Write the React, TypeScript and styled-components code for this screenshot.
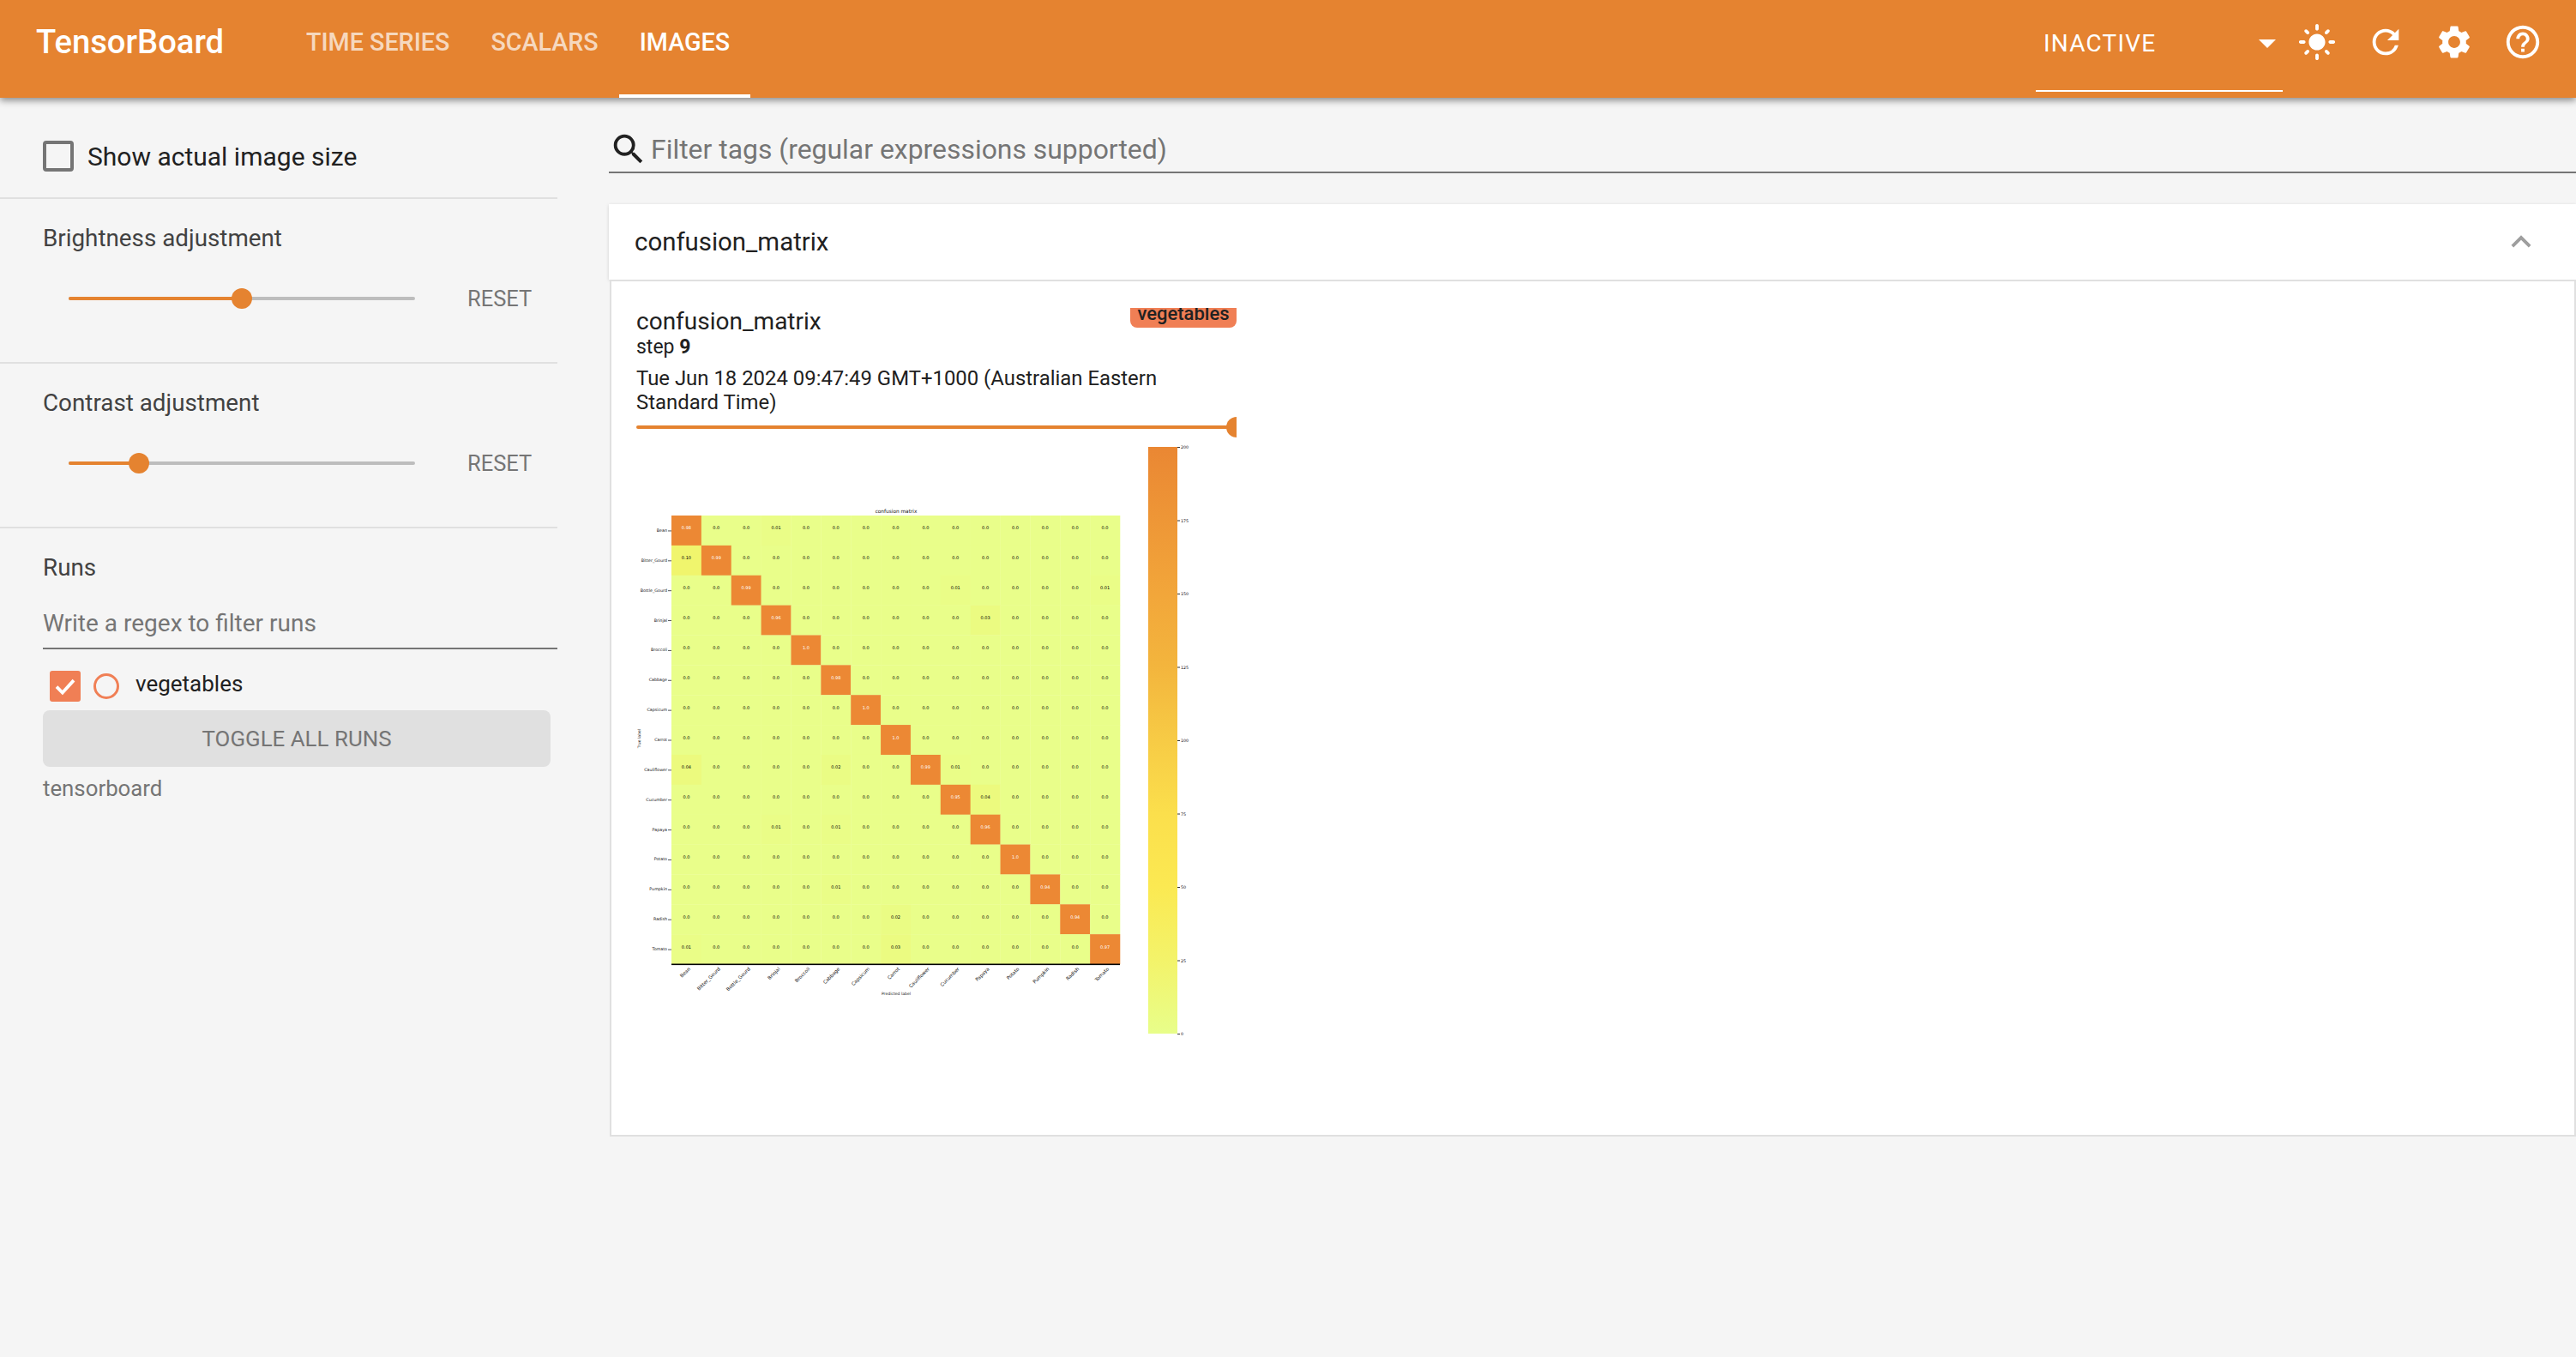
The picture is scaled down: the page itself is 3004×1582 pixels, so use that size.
import styled, { createGlobalStyle } from 'styled-components';

const ORANGE = '#e58330';
const RUN = '#f07f55';

const classes = [
  'Bean',
  'Bitter_Gourd',
  'Bottle_Gourd',
  'Brinjal',
  'Broccoli',
  'Cabbage',
  'Capsicum',
  'Carrot',
  'Cauliflower',
  'Cucumber',
  'Papaya',
  'Potato',
  'Pumpkin',
  'Radish',
  'Tomato',
];

const diagonal = [0.98, 0.99, 0.99, 0.96, 1.0, 0.98, 1.0, 1.0, 0.99, 0.95, 0.96, 1.0, 0.94, 0.94, 0.97];

// off-diagonal values, key is row-col
const offDiagonal: Record<string, number> = {
  '0-3': 0.01,
  '1-0': 0.1,
  '2-9': 0.01,
  '2-14': 0.01,
  '3-10': 0.03,
  '8-0': 0.04,
  '8-5': 0.02,
  '8-9': 0.01,
  '9-10': 0.04,
  '10-3': 0.01,
  '10-5': 0.01,
  '12-5': 0.01,
  '13-7': 0.02,
  '14-0': 0.01,
  '14-7': 0.03,
};

const ticks = ['200', '175', '150', '125', '100', '75', '50', '25', '0'];

const cellColor = (v: number) => {
  if (v > 0.5) return '#ec8834';
  const t = Math.min(v / 0.1, 1);
  const r = Math.round(233 + (240 - 233) * t);
  const g = Math.round(254 + (245 - 254) * t);
  const b = Math.round(138 + (109 - 138) * t);
  return `rgb(${r},${g},${b})`;
};

function Matrix() {
  const left = 783;
  const top = 601;
  const size = 523 / 15;

  return (
    <ChartSvg viewBox="743 510 699 705" width="699" height="705">
      <defs>
        <linearGradient id="bar" x1="0" y1="0" x2="0" y2="1">
          <stop offset="0" stopColor="#ea8733" />
          <stop offset="0.25" stopColor="#f2a63a" />
          <stop offset="0.375" stopColor="#f3b53d" />
          <stop offset="0.5" stopColor="#f7cb45" />
          <stop offset="0.625" stopColor="#fbdf4c" />
          <stop offset="0.75" stopColor="#fbe952" />
          <stop offset="0.875" stopColor="#f3f36a" />
          <stop offset="1" stopColor="#e8fe8a" />
        </linearGradient>
      </defs>

      <text x="1045" y="598" fontSize="5.8" textAnchor="middle" fill="#111">
        confusion matrix
      </text>

      {classes.map((_, row) =>
        classes.map((_, col) => {
          const v = row === col ? diagonal[row] : offDiagonal[`${row}-${col}`] || 0;
          const x = left + col * size;
          const y = top + row * size;
          return (
            <g key={`${row}-${col}`}>
              <rect x={x} y={y} width={size + 0.3} height={size + 0.3} fill={cellColor(v)} />
              <text
                x={x + size / 2}
                y={y + size / 2 - 1}
                fontSize="5"
                textAnchor="middle"
                fill={row === col ? '#fff' : '#000'}
              >
                {v === 0 ? '0.0' : v === 1 ? '1.0' : v.toFixed(2)}
              </text>
            </g>
          );
        }),
      )}

      {classes.map((name, i) => (
        <g key={name}>
          <text x={778} y={top + i * size + size / 2 + 1.5} fontSize="4.8" textAnchor="end" fill="#111">
            {name}
          </text>
          <rect x={779} y={top + i * size + size / 2} width={4} height={1} fill="#555" />
          <text
            fontSize="5.6"
            textAnchor="end"
            fill="#111"
            transform={`translate(${left + i * size + size / 2 + 5} 1130) rotate(-45)`}
          >
            {name}
          </text>
        </g>
      ))}

      <rect x={783} y={1123.5} width={523} height={1.6} fill="#000" />
      <text x="1045" y="1160" fontSize="4.6" textAnchor="middle" fill="#111">
        Predicted label
      </text>
      <text fontSize="4.6" textAnchor="middle" fill="#111" transform="translate(747 861) rotate(-90)">
        True label
      </text>

      <rect x={1339} y={521} width={34} height={684} fill="url(#bar)" />
      {ticks.map((label, i) => (
        <g key={label}>
          <rect x={1373} y={521 + i * 85.5} width={3} height={1} fill="#333" />
          <text x={1377} y={523 + i * 85.5} fontSize="4.8" fill="#111">
            {label}
          </text>
        </g>
      ))}
    </ChartSvg>
  );
}

function Adjustment({ label, percent }: { label: string; percent: number }) {
  return (
    <Section>
      <SectionLabel>{label}</SectionLabel>
      <SliderRow>
        <SliderTrack>
          <SliderFill style={{ width: `${percent}%` }} />
          <SliderThumb style={{ left: `${percent}%` }} />
        </SliderTrack>
        <ResetLabel>RESET</ResetLabel>
      </SliderRow>
    </Section>
  );
}

export default function App() {
  return (
    <>
      <GlobalStyle />
      <Toolbar>
        <Logo>TensorBoard</Logo>
        <Tabs>
          <Tab>TIME SERIES</Tab>
          <Tab>SCALARS</Tab>
          <Tab $active>IMAGES</Tab>
        </Tabs>
        <ToolbarRight>
          <StatusSelect>
            INACTIVE
            <Caret />
          </StatusSelect>
          <IconButton>
            <svg viewBox="0 0 24 24" width="46" height="46" fill="#fff">
              <path d="M12,7c-2.76,0-5,2.24-5,5s2.24,5,5,5s5-2.24,5-5S14.76,7,12,7L12,7z M2,13l2,0c0.55,0,1-0.45,1-1s-0.45-1-1-1l-2,0c-0.55,0-1,0.45-1,1S1.45,13,2,13z M20,13l2,0c0.55,0,1-0.45,1-1s-0.45-1-1-1l-2,0c-0.55,0-1,0.45-1,1S19.45,13,20,13z M11,2v2c0,0.55,0.45,1,1,1s1-0.45,1-1V2c0-0.55-0.45-1-1-1S11,1.45,11,2z M11,20v2c0,0.55,0.45,1,1,1s1-0.45,1-1v-2c0-0.55-0.45-1-1-1C11.45,19,11,19.45,11,20z M5.99,4.58c-0.39-0.39-1.03-0.39-1.41,0 c-0.39,0.39-0.39,1.03,0,1.41l1.06,1.06c0.39,0.39,1.03,0.39,1.41,0s0.39-1.03,0-1.41L5.99,4.58z M18.36,16.95 c-0.39-0.39-1.03-0.39-1.41,0c-0.39,0.39-0.39,1.03,0,1.41l1.06,1.06c0.39,0.39,1.03,0.39,1.41,0c0.39-0.39,0.39-1.03,0-1.41 L18.36,16.95z M19.42,5.99c0.39-0.39,0.39-1.03,0-1.41c-0.39-0.39-1.03-0.39-1.41,0l-1.06,1.06c-0.39,0.39-0.39,1.03,0,1.41 s1.03,0.39,1.41,0L19.42,5.99z M7.05,18.36c0.39-0.39,0.39-1.03,0-1.41c-0.39-0.39-1.03-0.39-1.41,0l-1.06,1.06 c-0.39,0.39-0.39,1.03,0,1.41s1.03,0.39,1.41,0L7.05,18.36z" />
            </svg>
          </IconButton>
          <IconButton>
            <svg viewBox="0 0 24 24" width="46" height="46" fill="#fff">
              <path d="M17.65 6.35A7.958 7.958 0 0 0 12 4c-4.42 0-7.99 3.58-7.99 8s3.57 8 7.99 8c3.73 0 6.84-2.55 7.73-6h-2.08A5.99 5.99 0 0 1 12 18c-3.31 0-6-2.69-6-6s2.69-6 6-6c1.66 0 3.14.69 4.22 1.78L13 11h7V4l-2.35 2.35z" />
            </svg>
          </IconButton>
          <IconButton>
            <svg viewBox="0 0 24 24" width="46" height="46" fill="#fff">
              <path d="M19.14 12.94c.04-.3.06-.61.06-.94 0-.32-.02-.64-.07-.94l2.03-1.58a.49.49 0 0 0 .12-.61l-1.92-3.32a.488.488 0 0 0-.59-.22l-2.39.96c-.5-.38-1.03-.7-1.62-.94l-.36-2.54a.484.484 0 0 0-.48-.41h-3.84c-.24 0-.43.17-.47.41l-.36 2.54c-.59.24-1.13.57-1.62.94l-2.39-.96c-.22-.08-.47 0-.59.22L2.74 8.87c-.12.21-.08.47.12.61l2.03 1.58c-.05.3-.09.63-.09.94s.02.64.07.94l-2.03 1.58a.49.49 0 0 0-.12.61l1.92 3.32c.12.22.37.29.59.22l2.39-.96c.5.38 1.03.7 1.62.94l.36 2.54c.05.24.24.41.48.41h3.84c.24 0 .44-.17.47-.41l.36-2.54c.59-.24 1.13-.56 1.62-.94l2.39.96c.22.08.47 0 .59-.22l1.92-3.32c.12-.22.07-.47-.12-.61l-2.01-1.58zM12 15.6c-1.98 0-3.6-1.62-3.6-3.6s1.62-3.6 3.6-3.6 3.6 1.62 3.6 3.6-1.62 3.6-3.6 3.6z" />
            </svg>
          </IconButton>
          <IconButton>
            <svg viewBox="0 0 24 24" width="46" height="46" fill="#fff">
              <path d="M11 18h2v-2h-2v2zm1-16C6.48 2 2 6.48 2 12s4.48 10 10 10 10-4.48 10-10S17.52 2 12 2zm0 18c-4.41 0-8-3.59-8-8s3.59-8 8-8 8 3.59 8 8-3.59 8-8 8zm0-14c-2.21 0-4 1.79-4 4h2c0-1.1.9-2 2-2s2 .9 2 2c0 2-3 1.75-3 5h2c0-2.25 3-2.5 3-5 0-2.21-1.79-4-4-4z" />
            </svg>
          </IconButton>
        </ToolbarRight>
      </Toolbar>

      <Body>
        <Sidebar>
          <ActualSizeSection>
            <EmptyCheckbox />
            <ActualSizeLabel>Show actual image size</ActualSizeLabel>
          </ActualSizeSection>
          <Adjustment label="Brightness adjustment" percent={50.1} />
          <Adjustment label="Contrast adjustment" percent={20.3} />
          <RunsSection>
            <SectionLabel>Runs</SectionLabel>
            <RunsFilter>Write a regex to filter runs</RunsFilter>
            <RunRow>
              <RunCheckbox>
                <svg viewBox="0 0 24 24" width="30" height="30" fill="none" stroke="#fff" strokeWidth="3">
                  <path d="M4 12.5l5.5 5.5L20 6.5" />
                </svg>
              </RunCheckbox>
              <RunRadio />
              <RunName>vegetables</RunName>
            </RunRow>
            <ToggleButton>TOGGLE ALL RUNS</ToggleButton>
            <LogDir>tensorboard</LogDir>
          </RunsSection>
        </Sidebar>

        <Main>
          <FilterBar>
            <svg viewBox="0 0 24 24" width="46" height="46" fill="#212121">
              <path d="M15.5 14h-.79l-.28-.27A6.471 6.471 0 0 0 16 9.5 6.5 6.5 0 1 0 9.5 16c1.61 0 3.09-.59 4.23-1.57l.27.28v.79l5 4.99L20.49 19l-4.99-5zm-6 0C7.01 14 5 11.99 5 9.5S7.01 5 9.5 5 14 7.01 14 9.5 11.99 14 9.5 14z" />
            </svg>
            <FilterText>Filter tags (regular expressions supported)</FilterText>
          </FilterBar>

          <GroupHeader>
            confusion_matrix
            <svg viewBox="0 0 24 24" width="46" height="46" fill="#9e9e9e">
              <path d="M12 8l-6 6 1.41 1.41L12 10.83l4.59 4.58L18 14z" />
            </svg>
          </GroupHeader>
          <GroupBody>
            <ImageCard>
              <CardTitle>confusion_matrix</CardTitle>
              <RunTag>vegetables</RunTag>
              <StepLine>
                step <b>9</b>
              </StepLine>
              <DateLine>Tue Jun 18 2024 09:47:49 GMT+1000 (Australian Eastern Standard Time)</DateLine>
              <StepSlider>
                <StepThumb />
              </StepSlider>
              <Matrix />
            </ImageCard>
          </GroupBody>
        </Main>
      </Body>
    </>
  );
}

const GlobalStyle = createGlobalStyle`
  html, body {
    margin: 0;
    background: #f5f5f5;
    font-family: Roboto, "Liberation Sans", sans-serif;
    overflow: hidden;
  }
`;

const Toolbar = styled.header`
  display: flex;
  position: relative;
  z-index: 2;
  height: 114px;
  padding-left: 42px;
  background: ${ORANGE};
  color: #fff;
  box-shadow: 0 3px 8px rgba(0, 0, 0, 0.45);
`;

const Logo = styled.div`
  width: 218px;
  height: 98px;
  line-height: 98px;
  font-size: 38.2px;
  font-weight: 500;
  white-space: nowrap;
`;

const Tabs = styled.nav`
  display: flex;
  margin-left: 73px;
`;

const Tab = styled.div<{ $active?: boolean }>`
  display: flex;
  align-items: center;
  box-sizing: border-box;
  height: 114px;
  padding: 0 24px 12px;
  border-bottom: 4px solid ${({ $active }) => ($active ? '#fff' : 'transparent')};
  font-size: 28.7px;
  font-weight: 500;
  color: ${({ $active }) => ($active ? '#fff' : 'rgba(255, 255, 255, 0.7)')};
`;

const ToolbarRight = styled.div`
  display: flex;
  margin-left: auto;
  padding-right: 22px;
`;

const StatusSelect = styled.div`
  display: flex;
  align-items: center;
  box-sizing: border-box;
  width: 288px;
  height: 107px;
  padding: 0 8px 4px 9px;
  border-bottom: 2px solid #fff;
  font-size: 28px;
  letter-spacing: 1.2px;
`;

const Caret = styled.span`
  margin-left: auto;
  border-left: 10px solid transparent;
  border-right: 10px solid transparent;
  border-top: 10px solid #fff;
`;

const IconButton = styled.div`
  display: flex;
  align-items: center;
  justify-content: center;
  width: 80px;
  height: 98px;
`;

const Body = styled.div`
  display: grid;
  grid-template-columns: 650px 1fr;
  height: 1468px;
`;

const Sidebar = styled.aside`
  background: #f5f5f5;
`;

const ActualSizeSection = styled.div`
  display: flex;
  align-items: center;
  box-sizing: border-box;
  height: 118px;
  padding: 20px 0 0 50px;
  border-bottom: 2px solid #e0e0e0;
`;

const EmptyCheckbox = styled.span`
  box-sizing: border-box;
  width: 36px;
  height: 36px;
  border: 4px solid #757575;
  border-radius: 4px;
`;

const ActualSizeLabel = styled.span`
  margin-left: 16px;
  font-size: 30px;
  color: #212121;
`;

const Section = styled.section`
  box-sizing: border-box;
  height: 192px;
  padding-top: 31px;
  border-bottom: 2px solid #e0e0e0;
`;

const SectionLabel = styled.div`
  margin-left: 50px;
  height: 30px;
  line-height: 30px;
  font-size: 27.8px;
  color: #424242;
`;

const SliderRow = styled.div`
  display: flex;
  align-items: center;
  height: 48px;
  margin-top: 31px;
  padding-left: 80px;
`;

const SliderTrack = styled.div`
  position: relative;
  width: 404px;
  height: 4px;
  border-radius: 2px;
  background: #bdbdbd;
`;

const SliderFill = styled.div`
  height: 100%;
  border-radius: 2px;
  background: ${ORANGE};
`;

const SliderThumb = styled.div`
  position: absolute;
  top: -10px;
  width: 24px;
  height: 24px;
  margin-left: -12px;
  border-radius: 50%;
  background: ${ORANGE};
`;

const ResetLabel = styled.span`
  margin-left: 61px;
  font-size: 25.5px;
  color: #757575;
`;

const RunsSection = styled.section`
  padding-top: 31px;
`;

const RunsFilter = styled.div`
  height: 54px;
  margin: 24px 0 0 50px;
  line-height: 52px;
  border-bottom: 2px solid #757575;
  font-size: 28px;
  color: #757575;
`;

const RunRow = styled.div`
  display: flex;
  align-items: center;
  height: 36px;
  margin-top: 25px;
  padding-left: 58px;
`;

const RunCheckbox = styled.span`
  display: flex;
  align-items: center;
  justify-content: center;
  width: 36px;
  height: 36px;
  border-radius: 3px;
  background: ${RUN};
`;

const RunRadio = styled.span`
  box-sizing: border-box;
  width: 30px;
  height: 30px;
  margin-left: 15px;
  border: 3px solid ${RUN};
  border-radius: 50%;
`;

const RunName = styled.span`
  margin: 0 0 6px 19px;
  font-size: 26px;
  color: #212121;
`;

const ToggleButton = styled.div`
  width: 592px;
  height: 66px;
  margin: 10px 0 0 50px;
  line-height: 66px;
  border-radius: 8px;
  background: #e0e0e0;
  text-align: center;
  font-size: 25.9px;
  color: #757575;
`;

const LogDir = styled.div`
  margin: 10px 0 0 50px;
  line-height: 30px;
  font-size: 25.8px;
  color: #757575;
`;

const Main = styled.main`
  padding-left: 60px;
  background: #f5f5f5;
`;

const FilterBar = styled.div`
  display: flex;
  align-items: center;
  height: 52px;
  margin-top: 34px;
  border-bottom: 2px solid #757575;
`;

const FilterText = styled.span`
  margin-left: 3px;
  font-size: 31.9px;
  color: #757575;
`;

const GroupHeader = styled.div`
  position: relative;
  display: flex;
  align-items: center;
  justify-content: space-between;
  box-sizing: border-box;
  height: 88px;
  margin-top: 36px;
  padding: 0 41px 0 30px;
  background: #fff;
  box-shadow: 0 1px 4px rgba(0, 0, 0, 0.15);
  font-size: 29.4px;
  color: #212121;
`;

const GroupBody = styled.div`
  position: relative;
  box-sizing: border-box;
  height: 999px;
  margin-left: 1px;
  padding: 30px 0 0 29px;
  border: 2px solid #e0e0e0;
  background: #fff;
`;

const ImageCard = styled.div`
  position: relative;
  width: 700px;
  color: #212121;
`;

const CardTitle = styled.div`
  margin-top: 1px;
  line-height: 32px;
  font-size: 28px;
`;

const StepLine = styled.div`
  line-height: 28px;
  font-size: 23px;

  b {
    font-weight: 700;
  }
`;

const DateLine = styled.div`
  width: 640px;
  margin-top: 8px;
  line-height: 28px;
  font-size: 23.9px;
`;

const RunTag = styled.div`
  position: absolute;
  top: 0;
  right: 0;
  width: 124px;
  height: 23px;
  overflow: hidden;
  line-height: 14px;
  border-radius: 0 0 8px 8px;
  background: ${RUN};
  text-align: center;
  font-size: 22px;
  font-weight: 500;
  color: #212121;
`;

const StepSlider = styled.div`
  position: relative;
  width: 700px;
  height: 24px;
  margin-top: 3px;
  overflow: hidden;

  &::before {
    content: '';
    position: absolute;
    left: 0;
    right: 0;
    top: 10px;
    height: 4px;
    border-radius: 2px;
    background: ${ORANGE};
  }
`;

const StepThumb = styled.div`
  position: absolute;
  top: 0;
  right: -12px;
  width: 24px;
  height: 24px;
  border-radius: 50%;
  background: ${ORANGE};
`;

const ChartSvg = styled.svg`
  display: block;
  margin-left: 1px;
  font-family: "DejaVu Sans", sans-serif;
`;
